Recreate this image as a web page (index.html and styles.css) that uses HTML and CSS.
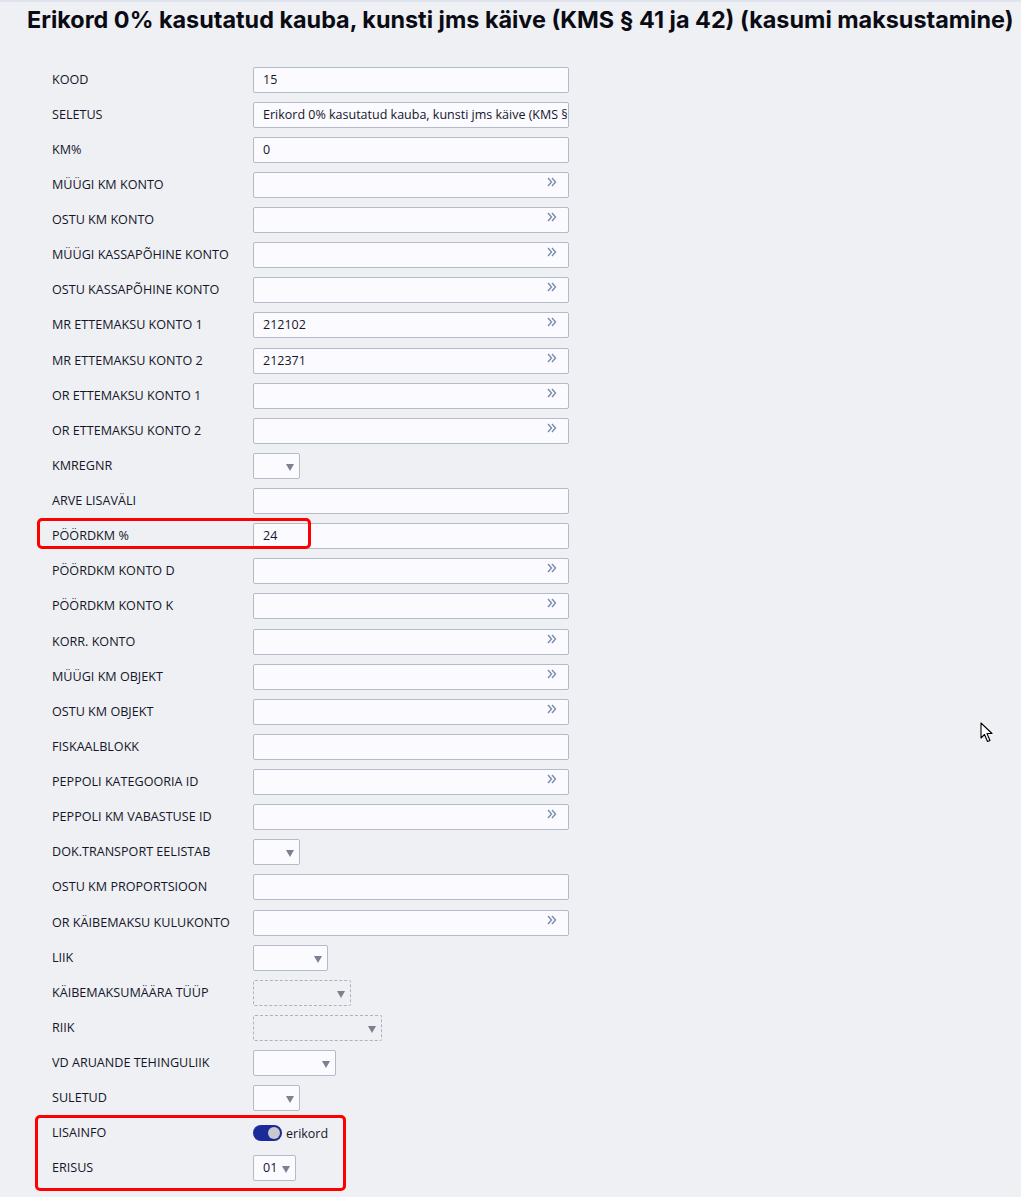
FILE: index.html
```html
<!DOCTYPE html>
<html lang="et">
<head>
<meta charset="utf-8">
<title>Erikord</title>
<link rel="stylesheet" href="styles.css">
</head>
<body>
<div class="topline"></div>
<h1 class="title">Erikord 0% kasutatud kauba, kunsti jms käive (KMS § 41 ja 42) (kasumi maksustamine)</h1>
<div class="form">
  <div class="row"><span class="lbl">KOOD</span><div class="inp">15</div></div>
  <div class="row"><span class="lbl">SELETUS</span><div class="inp">Erikord 0% kasutatud kauba, kunsti jms käive (KMS § 41 ja 42) (kasumi maksustamine)</div></div>
  <div class="row"><span class="lbl">KM%</span><div class="inp">0</div></div>
  <div class="row"><span class="lbl">MÜÜGI KM KONTO</span><div class="inp lookup"></div></div>
  <div class="row"><span class="lbl">OSTU KM KONTO</span><div class="inp lookup"></div></div>
  <div class="row"><span class="lbl">MÜÜGI KASSAPÕHINE KONTO</span><div class="inp lookup"></div></div>
  <div class="row"><span class="lbl">OSTU KASSAPÕHINE KONTO</span><div class="inp lookup"></div></div>
  <div class="row"><span class="lbl">MR ETTEMAKSU KONTO 1</span><div class="inp lookup">212102</div></div>
  <div class="row"><span class="lbl">MR ETTEMAKSU KONTO 2</span><div class="inp lookup">212371</div></div>
  <div class="row"><span class="lbl">OR ETTEMAKSU KONTO 1</span><div class="inp lookup"></div></div>
  <div class="row"><span class="lbl">OR ETTEMAKSU KONTO 2</span><div class="inp lookup"></div></div>
  <div class="row"><span class="lbl">KMREGNR</span><div class="sel w47"></div></div>
  <div class="row"><span class="lbl">ARVE LISAVÄLI</span><div class="inp"></div></div>
  <div class="row mark-row"><span class="lbl">PÖÖRDKM %</span><div class="inp">24</div><span class="mark mark1"></span></div>
  <div class="row"><span class="lbl">PÖÖRDKM KONTO D</span><div class="inp lookup"></div></div>
  <div class="row"><span class="lbl">PÖÖRDKM KONTO K</span><div class="inp lookup"></div></div>
  <div class="row"><span class="lbl">KORR. KONTO</span><div class="inp lookup"></div></div>
  <div class="row"><span class="lbl">MÜÜGI KM OBJEKT</span><div class="inp lookup"></div></div>
  <div class="row"><span class="lbl">OSTU KM OBJEKT</span><div class="inp lookup"></div></div>
  <div class="row"><span class="lbl">FISKAALBLOKK</span><div class="inp"></div></div>
  <div class="row"><span class="lbl">PEPPOLI KATEGOORIA ID</span><div class="inp lookup"></div></div>
  <div class="row"><span class="lbl">PEPPOLI KM VABASTUSE ID</span><div class="inp lookup"></div></div>
  <div class="row"><span class="lbl">DOK.TRANSPORT EELISTAB</span><div class="sel w47"></div></div>
  <div class="row"><span class="lbl">OSTU KM PROPORTSIOON</span><div class="inp"></div></div>
  <div class="row"><span class="lbl">OR KÄIBEMAKSU KULUKONTO</span><div class="inp lookup"></div></div>
  <div class="row"><span class="lbl">LIIK</span><div class="sel w75"></div></div>
  <div class="row"><span class="lbl">KÄIBEMAKSUMÄÄRA TÜÜP</span><div class="sel dashed w98"></div></div>
  <div class="row"><span class="lbl">RIIK</span><div class="sel dashed w129"></div></div>
  <div class="row"><span class="lbl">VD ARUANDE TEHINGULIIK</span><div class="sel w83"></div></div>
  <div class="row"><span class="lbl">SULETUD</span><div class="sel w47"></div></div>
  <div class="group">
    <div class="row"><span class="lbl">LISAINFO</span><div class="toggle-wrap"><span class="toggle"><span class="knob"></span></span><span class="toggle-text">erikord</span></div></div>
    <div class="row"><span class="lbl">ERISUS</span><div class="sel w43">01</div></div>
    <span class="mark mark2"></span>
  </div>
</div>
<svg class="cursor" width="14" height="22" viewBox="0 0 14 22"><path d="M1 1 L1 16 L4.5 12.5 L7.5 19.5 L10 18.5 L7 11.5 L12 11.5 Z" fill="#fff" stroke="#000" stroke-width="1.1" stroke-linejoin="round"/></svg>
</body>
</html>
```
FILE: styles.css
```css
html, body {
  margin: 0;
  padding: 0;
}
body {
  background: #eef0f3;
  width: 1021px;
  height: 1197px;
  overflow: hidden;
  position: relative;
  font-family: "Open Sans", "Noto Sans", sans-serif;
  color: #15162a;
}
.topline {
  height: 2px;
  background: #dde4ee;
}
.title {
  margin: 0;
  padding: 2px 0 0 27px;
  font-family: Inter, "Liberation Sans", sans-serif;
  font-weight: 700;
  font-size: 23.4px;
  line-height: 32px;
  color: #0b0b14;
  white-space: nowrap;
  letter-spacing: 0;
}
.form {
  padding: 26px 0 0 52px;
  position: relative;
}
.row {
  height: 35.13px;
  display: grid;
  grid-template-columns: 201px auto;
  align-items: center;
  position: relative;
}
.lbl {
  font-size: 12.6px;
  line-height: 16px;
  color: #15162a;
  white-space: nowrap;
}
.inp {
  box-sizing: border-box;
  width: 316px;
  height: 26px;
  border: 1px solid #b3bbca;
  border-radius: 2px;
  background: #fafaff;
  font-size: 12.5px;
  line-height: 24px;
  padding: 0 0 0 9px;
  white-space: nowrap;
  overflow: hidden;
  position: relative;
}
.lookup::after {
  content: "";
  position: absolute;
  right: 11px;
  top: 4px;
  width: 10px;
  height: 10px;
  background:
    url("data:image/svg+xml;utf8,<svg xmlns='http://www.w3.org/2000/svg' width='10' height='10' viewBox='0 0 10 10'><path d='M1 1 L4.5 5 L1 9 M5 1 L8.5 5 L5 9' fill='none' stroke='%237b8bb0' stroke-width='1.4'/></svg>") no-repeat;
}
.sel {
  box-sizing: border-box;
  height: 26px;
  border: 1px solid #b3bbca;
  border-radius: 2px;
  background: #fafaff;
  font-size: 12.5px;
  line-height: 24px;
  padding-left: 9px;
  position: relative;
}
.sel::after {
  content: "";
  position: absolute;
  right: 5px;
  top: 10px;
  border-left: 4px solid transparent;
  border-right: 4px solid transparent;
  border-top: 7px solid #7d8090;
}
.dashed {
  border: 1px dashed #aeb2be;
  background: transparent;
}
.w43 { width: 43px; }
.w47 { width: 47px; }
.w75 { width: 75px; }
.w83 { width: 83px; }
.w98 { width: 98px; }
.w129 { width: 129px; }
.toggle-wrap {
  display: flex;
  align-items: center;
  gap: 4px;
}
.toggle {
  width: 29px;
  height: 16px;
  border-radius: 8px;
  background: #1b2a99;
  position: relative;
  display: inline-block;
}
.knob {
  position: absolute;
  right: 2px;
  top: 2px;
  width: 12px;
  height: 12px;
  border-radius: 50%;
  background: #c9c9cc;
}
.toggle-text {
  font-size: 12.5px;
  color: #15162a;
}
.group {
  position: relative;
}
.mark {
  position: absolute;
  border: 3px solid #ff0000;
  border-radius: 5px;
  pointer-events: none;
}
.mark1 {
  left: -15px;
  top: -1px;
  width: 268px;
  height: 25px;
}
.mark2 {
  left: -17px;
  top: -1px;
  width: 305px;
  height: 70px;
}
.cursor {
  position: absolute;
  left: 980px;
  top: 722px;
}
```
